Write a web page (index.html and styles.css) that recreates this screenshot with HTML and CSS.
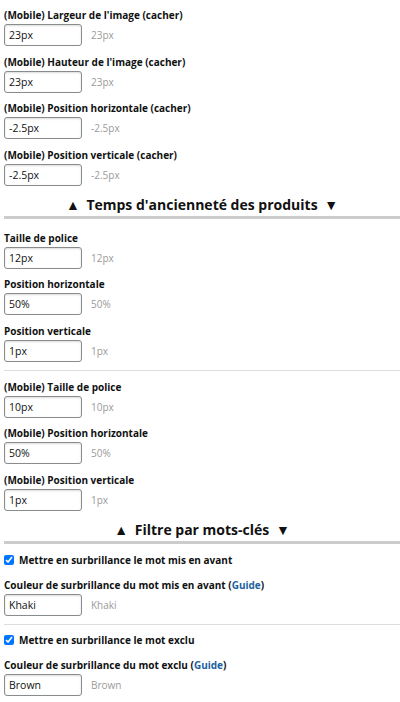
FILE: index.html
```html
<!DOCTYPE html>
<html lang="fr">
<head>
<meta charset="utf-8">
<link rel="stylesheet" href="styles.css">
</head>
<body>
<div class="panel">
  <div class="field">
    <div class="label">(Mobile) Largeur de l'image (cacher)</div>
    <div class="row"><input class="txt" value="23px"><span class="hint">23px</span></div>
  </div>
  <div class="field">
    <div class="label">(Mobile) Hauteur de l'image (cacher)</div>
    <div class="row"><input class="txt" value="23px"><span class="hint">23px</span></div>
  </div>
  <div class="field">
    <div class="label">(Mobile) Position horizontale (cacher)</div>
    <div class="row"><input class="txt" value="-2.5px"><span class="hint">-2.5px</span></div>
  </div>
  <div class="field">
    <div class="label">(Mobile) Position verticale (cacher)</div>
    <div class="row"><input class="txt" value="-2.5px"><span class="hint">-2.5px</span></div>
  </div>

  <h2 class="section"><span class="arrow arrow--up">▲</span> Temps d'ancienneté des produits <span class="arrow arrow--down">▼</span></h2>

  <div class="field">
    <div class="label">Taille de police</div>
    <div class="row"><input class="txt" value="12px"><span class="hint">12px</span></div>
  </div>
  <div class="field">
    <div class="label">Position horizontale</div>
    <div class="row"><input class="txt" value="50%"><span class="hint">50%</span></div>
  </div>
  <div class="field">
    <div class="label">Position verticale</div>
    <div class="row"><input class="txt" value="1px"><span class="hint">1px</span></div>
  </div>
  <hr class="sep">
  <div class="field">
    <div class="label">(Mobile) Taille de police</div>
    <div class="row"><input class="txt" value="10px"><span class="hint">10px</span></div>
  </div>
  <div class="field">
    <div class="label">(Mobile) Position horizontale</div>
    <div class="row"><input class="txt" value="50%"><span class="hint">50%</span></div>
  </div>
  <div class="field">
    <div class="label">(Mobile) Position verticale</div>
    <div class="row"><input class="txt" value="1px"><span class="hint">1px</span></div>
  </div>

  <h2 class="section section--tight"><span class="arrow arrow--up">▲</span> Filtre par mots-clés <span class="arrow arrow--down">▼</span></h2>

  <label class="check"><input type="checkbox" checked><span>Mettre en surbrillance le mot mis en avant</span></label>
  <div class="field">
    <div class="label">Couleur de surbrillance du mot mis en avant (<a href="#" class="link">Guide</a>)</div>
    <div class="row"><input class="txt" value="Khaki"><span class="hint">Khaki</span></div>
  </div>
  <hr class="sep sep--low">
  <label class="check"><input type="checkbox" checked><span>Mettre en surbrillance le mot exclu</span></label>
  <div class="field">
    <div class="label">Couleur de surbrillance du mot exclu (<a href="#" class="link">Guide</a>)</div>
    <div class="row"><input class="txt" value="Brown"><span class="hint">Brown</span></div>
  </div>
</div>
</body>
</html>
```

FILE: styles.css
```css
html, body {
  margin: 0;
  padding: 0;
  background: #ffffff;
}
body {
  font-family: "Open Sans", "Liberation Sans", sans-serif;
  color: #0f1111;
  font-size: 10px;
}
.panel {
  padding: 7px 0 0 4px;
}
.field {
  margin-bottom: 7.6px;
}
.label {
  font-weight: 700;
  font-size: 10px;
  line-height: 17px;
  white-space: nowrap;
}
.row {
  display: flex;
  align-items: center;
  gap: 9px;
}
.txt {
  box-sizing: border-box;
  width: 78px;
  height: 22px;
  margin: 0;
  padding: 0 4px;
  border: 1px solid #888c8c;
  border-radius: 3px;
  box-shadow: inset 0 1px 2px rgba(15, 17, 17, 0.15);
  font-family: inherit;
  font-size: 10.5px;
  color: #0f1111;
  background: #fff;
}
.hint {
  color: #9a9a9a;
  font-size: 10px;
}
.section {
  margin: 0 0 11px 0;
  padding: 1.5px 0 1px 0;
  text-align: center;
  font-size: 14px;
  line-height: 20px;
  font-weight: 700;
  color: #111;
  border-bottom: 3px solid #cccccc;
}
.section--tight {
  margin-bottom: 9px;
}
.arrow--up {
  margin-right: 3px;
}
.arrow--down {
  margin-left: 3px;
}
.sep {
  margin: 0 0 8px 0;
  border: 0;
  border-top: 1px solid #dddddd;
  height: 0;
}
.sep--low {
  margin-top: 1.5px;
}
.check {
  display: flex;
  align-items: center;
  gap: 5px;
  font-weight: 700;
  font-size: 10px;
  line-height: 15px;
  margin-bottom: 9px;
}
.check input {
  width: 10px;
  height: 10px;
  margin: 0;
  accent-color: #0075ff;
}
.link {
  color: #2162a1;
  text-decoration: none;
}
```
